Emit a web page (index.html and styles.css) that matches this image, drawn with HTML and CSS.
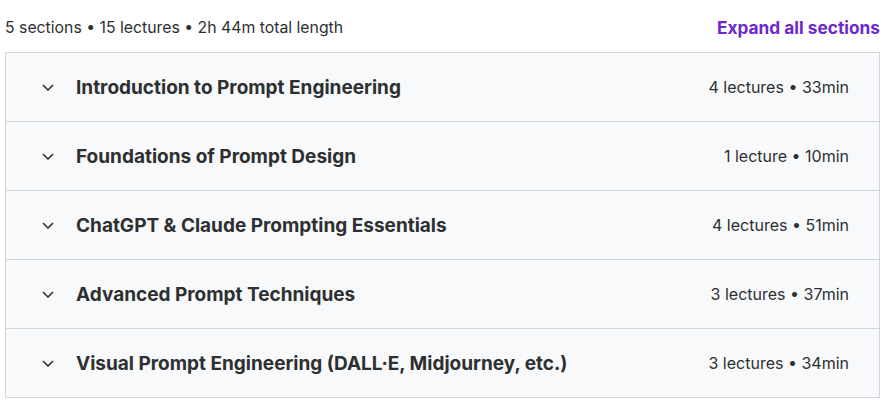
FILE: index.html
```html
<!DOCTYPE html>
<html lang="en">
<head>
    <meta charset="UTF-8">
    <title>Course content</title>
    <link rel="stylesheet" href="styles.css">
</head>
<body>
    <div class="curriculum">
        <div class="summary">
            <span>5 sections • 15 lectures • 2h 44m total length</span>
            <button class="expand">Expand all sections</button>
        </div>
        <div class="sections">
            <div class="section">
                <svg class="chevron" viewBox="0 0 12 7"><path d="M1 1l5 5 5-5"/></svg>
                <span class="title">Introduction to Prompt Engineering</span>
                <span class="meta">4 lectures • 33min</span>
            </div>
            <div class="section">
                <svg class="chevron" viewBox="0 0 12 7"><path d="M1 1l5 5 5-5"/></svg>
                <span class="title">Foundations of Prompt Design</span>
                <span class="meta">1 lecture • 10min</span>
            </div>
            <div class="section">
                <svg class="chevron" viewBox="0 0 12 7"><path d="M1 1l5 5 5-5"/></svg>
                <span class="title">ChatGPT &amp; Claude Prompting Essentials</span>
                <span class="meta">4 lectures • 51min</span>
            </div>
            <div class="section">
                <svg class="chevron" viewBox="0 0 12 7"><path d="M1 1l5 5 5-5"/></svg>
                <span class="title">Advanced Prompt Techniques</span>
                <span class="meta">3 lectures • 37min</span>
            </div>
            <div class="section">
                <svg class="chevron" viewBox="0 0 12 7"><path d="M1 1l5 5 5-5"/></svg>
                <span class="title">Visual Prompt Engineering (DALL·E, Midjourney, etc.)</span>
                <span class="meta">3 lectures • 34min</span>
            </div>
        </div>
    </div>
</body>
</html>
```

FILE: styles.css
```css
body {
    margin: 0;
    font-family: Inter, "Liberation Sans", sans-serif;
    color: #2d2f31;
    background: #fff;
}
.curriculum {
    padding: 0 5px 0 5px;
}
.summary {
    display: flex;
    justify-content: space-between;
    align-items: center;
    height: 52px;
    padding-top: 2px;
    box-sizing: border-box;
    font-size: 15.8px;
}
.expand {
    background: none;
    border: none;
    padding: 0;
    font-family: inherit;
    font-size: 17.3px;
    font-weight: 700;
    color: #6d28d2;
    cursor: pointer;
}
.sections {
    border: 1px solid #d1d7dc;
    border-bottom: none;
}
.section {
    display: flex;
    align-items: center;
    height: 68px;
    padding: 0 30px 0 36px;
    background: #f7f9fa;
    border-bottom: 1px solid #d1d7dc;
}
.chevron {
    width: 12px;
    height: 7px;
    margin-right: 22px;
    fill: none;
    stroke: #2d2f31;
    stroke-width: 1.6;
}
.title {
    flex: 1;
    font-size: 19px;
    font-weight: 700;
}
.meta {
    font-size: 16px;
}
```
